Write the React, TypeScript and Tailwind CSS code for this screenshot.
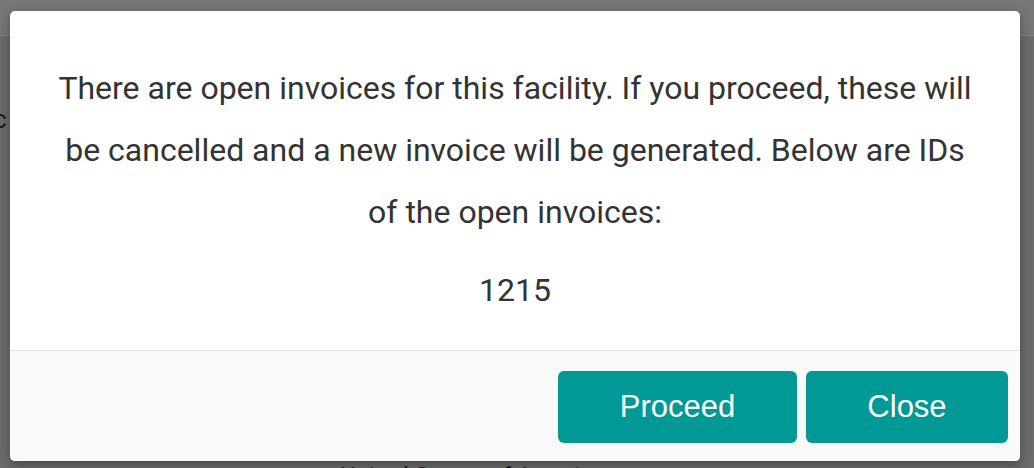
export default function App() {
  return (
    <div className="relative w-[1034px] h-[468px] overflow-hidden bg-[#6c6c6c] font-['Roboto',sans-serif]">
      {/* page behind the overlay */}
      <div className="h-[36px] bg-[#777777] border-b border-[#838383]" />
      <div className="pt-[70px] text-[26px] leading-none text-[#1a1a1a] -ml-[7px]">c</div>
      <div className="absolute left-[340px] top-[458px] text-[24px] text-[#1a1a1a]">United States of America</div>

      {/* modal */}
      <div className="absolute left-[10px] top-[11px] w-[1010px] h-[450px] flex flex-col bg-white rounded-[5px] shadow-[0_4px_12px_rgba(0,0,0,0.35)] overflow-hidden">
        <div className="flex-1 flex flex-col items-center px-[30px] pt-[46px] text-center text-[#333333]">
          <p className="text-[32px] leading-[62px] max-w-[922px]">
            There are open invoices for this facility. If you proceed, these will be cancelled and a new invoice will be generated. Below are IDs of the open invoices:
          </p>
          <p className="text-[32px] leading-[62px] mt-[16px]">1215</p>
        </div>
        <div className="h-[111px] shrink-0 border-t border-[#e3e3e3] bg-[#f9f9f9] flex items-start justify-end gap-[9px] pt-[20px] pr-[12px]">
          <button className="w-[239px] h-[72px] rounded-[6px] bg-[#009995] text-white text-[31px] font-['Liberation_Sans',Arial,sans-serif]">
            Proceed
          </button>
          <button className="w-[202px] h-[72px] rounded-[6px] bg-[#009995] text-white text-[31px] font-['Liberation_Sans',Arial,sans-serif]">
            Close
          </button>
        </div>
      </div>
    </div>
  );
}
